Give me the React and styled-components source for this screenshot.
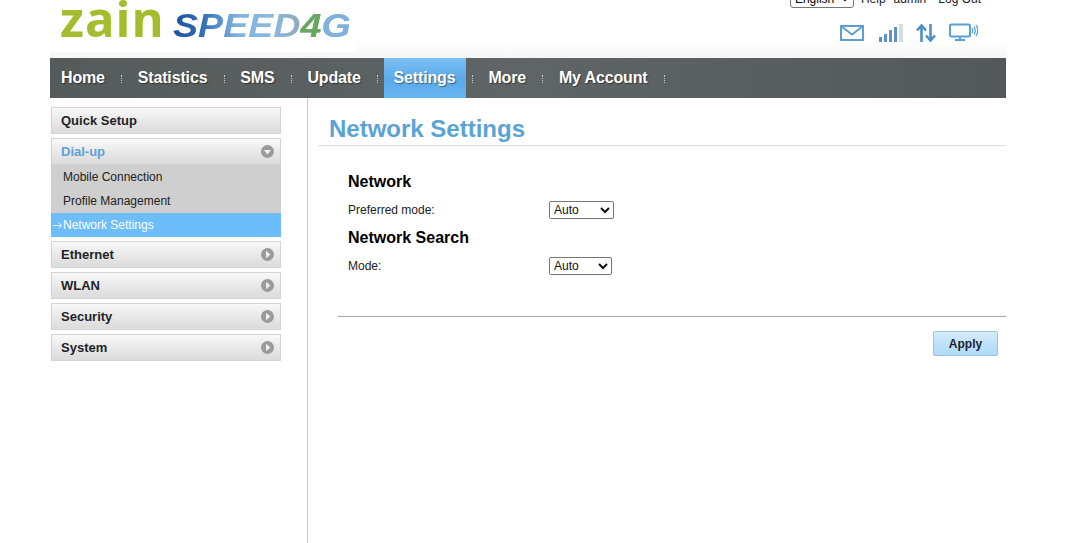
import React from 'react';
import styled, { createGlobalStyle } from 'styled-components';

const GlobalStyle = createGlobalStyle`
  html, body {
    margin: 0;
    padding: 0;
    height: 100%;
    background: #fff;
    overflow: hidden;
    font-family: "Liberation Sans", Arial, sans-serif;
  }
  #root { height: 100%; }
`;

const Page = styled.div`
  width: 956px;
  height: 543px;
  margin-left: 50px;
  display: flex;
  flex-direction: column;
`;

const Header = styled.header`
  height: 58px;
  display: flex;
  justify-content: space-between;
  overflow: hidden;
  background: linear-gradient(#fff 70%, #f6f6f6);
`;

const LogoArea = styled.div`
  display: flex;
  align-items: baseline;
  width: 306px;
  height: 52px;
  padding-left: 10px;
  box-sizing: border-box;
  background: #fff;
`;

const ZainMark = styled.span`
  font-family: "Open Sans", sans-serif;
  font-size: 49px;
  line-height: 37px;
  font-weight: 700;
  letter-spacing: 1px;
  color: #a5bc2c;
`;

const SpeedMark = styled.span`
  font-family: "Liberation Sans", sans-serif;
  font-size: 33px;
  line-height: 37px;
  font-weight: 700;
  font-style: italic;
  margin-left: 8px;
  transform: scaleX(1.14);
  transform-origin: left center;
  color: transparent;
  background: linear-gradient(90deg, #1c4f9c 0%, #2f6db5 16%, #7fb2e0 36%, #8db9df 56%, #8fa9ba 72%);
  background-clip: text;
  -webkit-background-clip: text;
`;

const FourMark = styled.span`
  color: #66a95e;
`;

const GMark = styled.span`
  color: #7fb2df;
`;

const HeaderRight = styled.div`
  display: flex;
  flex-direction: column;
  align-items: flex-end;
`;

const UtilityBar = styled.div`
  display: flex;
  align-items: center;
  height: 19px;
  margin-top: -11px;
  margin-right: 25px;
  font-size: 12px;
  color: #222;
`;

const LangSelect = styled.select`
  width: 64px;
  height: 19px;
  margin-right: 7px;
  padding: 0;
  font-family: "Liberation Sans", Arial, sans-serif;
  font-size: 12px;
  background: #fff;
  border: 1px solid #767676;
  border-radius: 3px;
`;

const UtilityLink = styled.span`
  margin-right: ${(p) => p.$gap || 0}px;
`;

const StatusIcons = styled.div`
  display: flex;
  align-items: center;
  margin-top: 15px;
  margin-right: 28px;

  & > svg {
    margin-left: 13px;
  }

  & > svg:nth-child(2) {
    margin-left: 15px;
  }
`;

const Nav = styled.nav`
  flex: none;
  height: 40px;
  display: flex;
  padding-left: 1px;
  background: linear-gradient(90deg, #555a5b, #5f6566 50%, #53585a);
`;

const NavItem = styled.div`
  display: flex;
  align-items: center;
  padding: 0 10.500px 0 10px;
  font-size: 16px;
  font-weight: 700;
  letter-spacing: -0.15px;
  color: #fff;
  text-shadow: 1px 1px 1px rgba(0, 0, 0, 0.45);
  background: ${(p) => (p.$active ? 'linear-gradient(#7cc0f6, #5aa9e8 55%, #68b6f2)' : 'none')};
`;

const NavSep = styled.i`
  width: 1px;
  height: 8px;
  margin: 17px 5.700px 0;
  border-left: 1px dotted #c5c9c9;
  box-sizing: border-box;
`;

const Body = styled.div`
  flex: 1;
  display: flex;
  min-height: 0;
`;

const Sidebar = styled.aside`
  flex: none;
  width: 230px;
  margin: 0 26px 0 1px;
  padding-top: 9px;
  display: flex;
  flex-direction: column;
  gap: 4px;
`;

const MenuGroup = styled.div`
  display: flex;
  flex-direction: column;
`;

const MenuHead = styled.div`
  height: 27px;
  box-sizing: border-box;
  display: flex;
  align-items: center;
  justify-content: space-between;
  padding: 0 6px 1px 9px;
  border: 1px solid #d4d4d4;
  background: linear-gradient(#f8f8f8, #e0e0e0 80%, #dcdcdc);
  font-size: 13px;
  font-weight: 700;
  color: ${(p) => (p.$open ? '#5ba2d6' : '#1f2328')};
`;

const SubMenu = styled.div`
  display: flex;
  flex-direction: column;
  background: #cfcfcf;
`;

const SubItem = styled.div`
  height: 24px;
  display: flex;
  align-items: center;
  padding-left: ${(p) => (p.$active ? 2 : 12)}px;
  font-size: 12px;
  color: ${(p) => (p.$active ? '#fff' : '#222')};
  background: ${(p) => (p.$active ? '#6cbdf8' : 'none')};
`;

const Content = styled.main`
  flex: 1;
  border-left: 1px solid #c9c9c9;
  padding: 9px 0 0 10px;
  min-width: 0;
`;

const Title = styled.h1`
  margin: 0;
  height: 39px;
  box-sizing: border-box;
  padding: 8px 0 0 11px;
  font-size: 24px;
  line-height: 28px;
  font-weight: 700;
  color: #5ba3d6;
  border-bottom: 1px solid #dedede;
`;

const Form = styled.div`
  padding: 26px 0 0 30px;
`;

const SectionTitle = styled.h2`
  margin: 0;
  font-size: 16px;
  line-height: 20px;
  font-weight: 700;
  color: #000;
`;

const Row = styled.div`
  display: flex;
  align-items: center;
  height: 18px;
  margin: 9px 0;
  font-size: 12px;
  color: #222;
`;

const RowLabel = styled.label`
  width: 201px;
`;

const ModeSelect = styled.select`
  width: ${(p) => p.$width}px;
  height: 18px;
  padding: 0;
  font-family: "Liberation Sans", Arial, sans-serif;
  font-size: 12px;
  color: #111;
  background: #fff;
  border: 1px solid #767676;
  border-radius: 2px;
`;

const Footer = styled.div`
  margin: 41px 0 0 20px;
  padding: 14px 8px 0 0;
  border-top: 1px solid #aaa;
  display: flex;
  justify-content: flex-end;
`;

const ApplyButton = styled.button`
  width: 65px;
  height: 25px;
  padding: 0;
  border: 1px solid #9cc3dc;
  border-radius: 2px;
  background: linear-gradient(#d8ebf9, #bfe0f9 55%, #b0dbf9);
  font-family: "Liberation Sans", Arial, sans-serif;
  font-size: 12px;
  font-weight: 700;
  color: #1a2330;
`;

const MailIcon = () => (
  <svg width="24" height="16" viewBox="0 0 24 16" fill="none" stroke="#5b9fd6" strokeWidth="2">
    <rect x="1" y="1" width="22" height="14" />
    <path d="M1.500 1.500 12 9.500 22.500 1.500" />
  </svg>
);

const SignalIcon = () => (
  <svg width="24" height="18" viewBox="0 0 24 18">
    <rect x="0" y="13" width="3" height="5" fill="#5b93c4" />
    <rect x="5" y="10" width="3" height="8" fill="#5b93c4" />
    <rect x="10" y="6" width="3" height="12" fill="#5b93c4" />
    <rect x="15" y="3" width="3" height="15" fill="#5b93c4" />
    <rect x="20" y="0" width="4" height="18" fill="#d9dcde" />
  </svg>
);

const TrafficIcon = () => (
  <svg width="20" height="18" viewBox="0 0 20 18" fill="none" stroke="#4f8fc6" strokeWidth="2.600">
    <path d="M5.500 18V3M1 6.500l4.500-5 4.500 5" />
    <path d="M14.500 0v15M10 11.500l4.500 5 4.500-5" />
  </svg>
);

const DeviceIcon = () => (
  <svg width="29" height="19" viewBox="0 0 29 19" fill="none" stroke="#5b9fd6">
    <rect x="1" y="1.500" width="20" height="12" rx="1.500" strokeWidth="2" />
    <path d="M6 17h10M11 14v3" strokeWidth="2" />
    <path d="M23 5q1.500 2.500 0 5M25 3.500q2.500 4 0 8M27 2q3.500 5.500 0 11" strokeWidth="1.300" />
  </svg>
);

const MenuArrow = ({ open }) => (
  <svg width="13" height="13" viewBox="0 0 13 13">
    <circle cx="6.500" cy="6.500" r="6.500" fill="#9a9a9a" />
    <path d={open ? 'M2.800 5h7.400L6.500 9.500z' : 'M5 2.800v7.400L9.500 6.500z'} fill="#eee" />
  </svg>
);

const ActiveArrow = styled.svg`
  width: 9px;
  height: 7px;
  margin-right: 1px;
  fill: none;
  stroke: #fff;
  stroke-width: 0.8;
`;

const navItems = ['Home', 'Statistics', 'SMS', 'Update', 'Settings', 'More', 'My Account'];
const closedMenus = ['Ethernet', 'WLAN', 'Security', 'System'];

export default function App() {
  return (
    <Page>
      <GlobalStyle />
      <Header>
        <LogoArea>
          <ZainMark>zain</ZainMark>
          <SpeedMark>
            SPEED<FourMark>4</FourMark><GMark>G</GMark>
          </SpeedMark>
        </LogoArea>
        <HeaderRight>
          <UtilityBar>
            <LangSelect defaultValue="English">
              <option>English</option>
            </LangSelect>
            <UtilityLink $gap={8}>Help</UtilityLink>
            <UtilityLink $gap={12}>admin</UtilityLink>
            <UtilityLink>Log Out</UtilityLink>
          </UtilityBar>
          <StatusIcons>
            <MailIcon />
            <SignalIcon />
            <TrafficIcon />
            <DeviceIcon />
          </StatusIcons>
        </HeaderRight>
      </Header>
      <Nav>
        {navItems.map((item) => (
          <React.Fragment key={item}>
            <NavItem $active={item === 'Settings'}>{item}</NavItem>
            <NavSep />
          </React.Fragment>
        ))}
      </Nav>
      <Body>
        <Sidebar>
          <MenuHead>Quick Setup</MenuHead>
          <MenuGroup>
            <MenuHead $open>
              Dial-up
              <MenuArrow open />
            </MenuHead>
            <SubMenu>
              <SubItem>Mobile Connection</SubItem>
              <SubItem>Profile Management</SubItem>
              <SubItem $active>
                <ActiveArrow viewBox="0 0 9 7">
                  <path d="M0 3.500h8.500M5.500 0.500l3 3-3 3" />
                </ActiveArrow>
                Network Settings
              </SubItem>
            </SubMenu>
          </MenuGroup>
          {closedMenus.map((menu) => (
            <MenuHead key={menu}>
              {menu}
              <MenuArrow />
            </MenuHead>
          ))}
        </Sidebar>
        <Content>
          <Title>Network Settings</Title>
          <Form>
            <SectionTitle>Network</SectionTitle>
            <Row>
              <RowLabel>Preferred mode:</RowLabel>
              <ModeSelect $width={65} defaultValue="Auto">
                <option>Auto</option>
              </ModeSelect>
            </Row>
            <SectionTitle>Network Search</SectionTitle>
            <Row>
              <RowLabel>Mode:</RowLabel>
              <ModeSelect $width={63} defaultValue="Auto">
                <option>Auto</option>
              </ModeSelect>
            </Row>
          </Form>
          <Footer>
            <ApplyButton>Apply</ApplyButton>
          </Footer>
        </Content>
      </Body>
    </Page>
  );
}
